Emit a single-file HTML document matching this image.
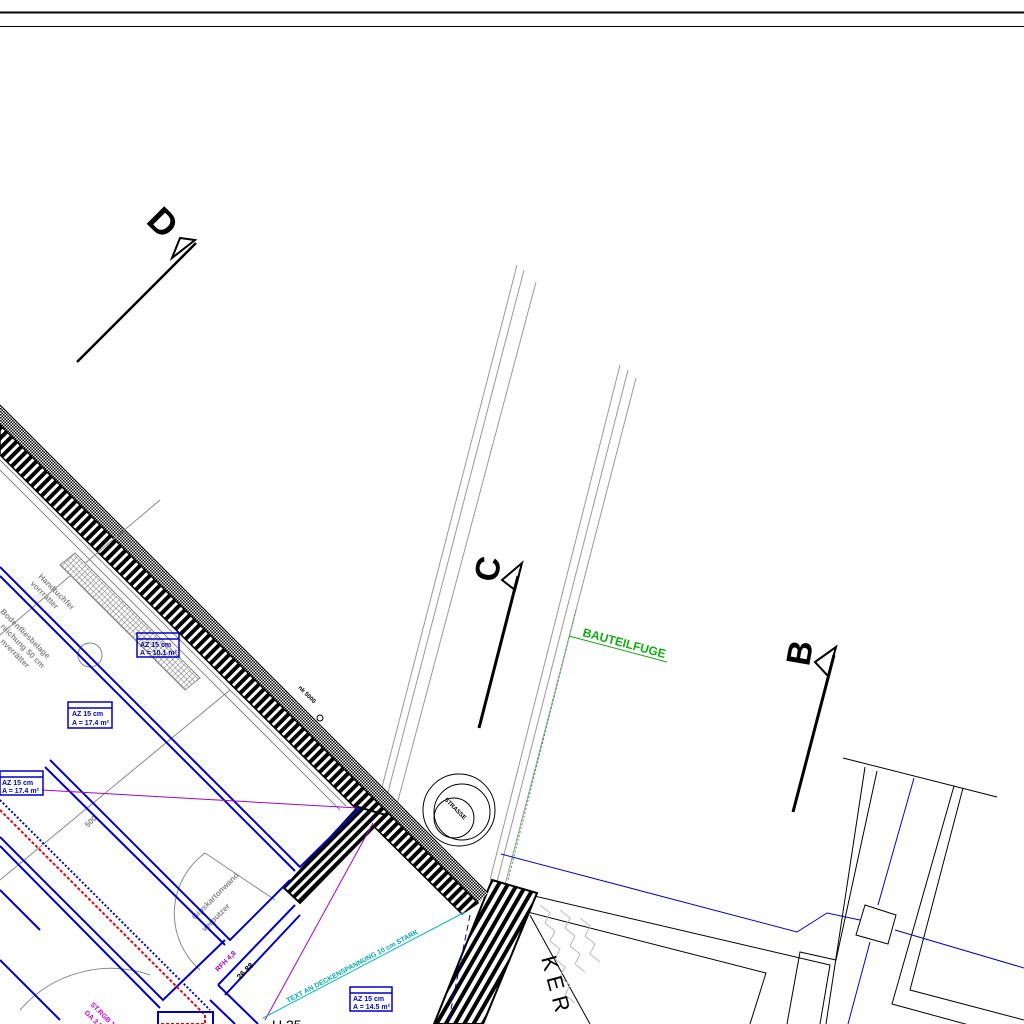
<!DOCTYPE html>
<html><head><meta charset="utf-8"><style>
html,body{margin:0;padding:0;background:#fff;width:1024px;height:1024px;overflow:hidden}
svg{display:block}
text{font-family:"Liberation Sans",sans-serif;font-weight:bold}
</style></head><body>
<svg width="1024" height="1024" viewBox="0 0 1024 1024" xmlns="http://www.w3.org/2000/svg">
<defs>
<pattern id="hat" width="7" height="7" patternUnits="userSpaceOnUse" patternTransform="rotate(-45)">
<rect width="7" height="7" fill="#fff"/><rect width="7" height="4" fill="#000"/>
</pattern>
<pattern id="hat2" width="8" height="8" patternUnits="userSpaceOnUse" patternTransform="rotate(30)">
<rect width="8" height="8" fill="#fff"/><rect width="4" height="8" fill="#000"/>
</pattern>
<pattern id="dots" width="3" height="3" patternUnits="userSpaceOnUse">
<rect width="3" height="3" fill="#fff"/><rect width="1.5" height="1.5" fill="#000"/><rect x="1.5" y="1.5" width="1.5" height="1.5" fill="#000"/>
</pattern>
<pattern id="grid" width="4" height="4" patternUnits="userSpaceOnUse" patternTransform="rotate(45)">
<rect width="4" height="4" fill="#fff"/><path d="M0 0H4M0 0V4" stroke="#777" stroke-width="1"/>
</pattern>
</defs>
<line x1="0" y1="12.5" x2="1024" y2="12.5" stroke="#000" stroke-width="2"/>
<line x1="0" y1="26.5" x2="1024" y2="26.5" stroke="#000" stroke-width="1"/>

<text x="0" y="0" font-size="36" transform="translate(145,222) rotate(45)" style="font-weight:bold">D</text>
<polygon points="172,258 195,240 180,238" fill="none" stroke="#000" stroke-width="2"/>
<line x1="77" y1="362" x2="196" y2="243" stroke="#000" stroke-width="2.5"/>
<text x="0" y="0" font-size="34" transform="translate(497,583) rotate(-80)" style="font-weight:bold">C</text>
<polygon points="502,580 522,563 515,590" fill="none" stroke="#000" stroke-width="2"/>
<line x1="479" y1="728" x2="518" y2="576" stroke="#000" stroke-width="3"/>
<text x="0" y="0" font-size="34" transform="translate(809,667) rotate(-80)" style="font-weight:bold">B</text>
<polygon points="815,662 836,647 828,676" fill="none" stroke="#000" stroke-width="2"/>
<line x1="793" y1="812" x2="834" y2="655" stroke="#000" stroke-width="3"/>

<g stroke="#999" stroke-width="1" fill="none">
<line x1="517" y1="265" x2="380" y2="795"/>
<line x1="524" y1="270" x2="386" y2="800"/>
<line x1="536" y1="282" x2="396" y2="808"/>
<line x1="620" y1="365" x2="490" y2="880"/>
<line x1="628" y1="370" x2="497" y2="882"/>
<line x1="636" y1="378" x2="505" y2="885"/>
</g>
<line x1="576" y1="610" x2="508" y2="880" stroke="#2a2" stroke-width="1" stroke-dasharray="2,2"/>
<text transform="translate(582,636) rotate(15)" font-size="12" fill="#1a1">BAUTEILFUGE</text>
<line x1="569" y1="636" x2="667" y2="662" stroke="#1a1" stroke-width="1"/>

<circle cx="459" cy="810" r="36" fill="none" stroke="#000"/>
<circle cx="462" cy="812" r="28" fill="none" stroke="#000"/>
<circle cx="454" cy="818" r="20" fill="none" stroke="#000"/>
<text transform="translate(444,800) rotate(45)" font-size="6">STRASSE</text>

<g stroke="#000" stroke-width="1" fill="none">
<line x1="843" y1="758" x2="997" y2="797"/>
<polyline points="865,767 826,1024"/>
<polyline points="877,771 836,960 800,952 787,1024"/>
<polyline points="954,786 892,1004 1024,1040"/>
<polyline points="963,788 910,990 1024,1020"/>
<polyline points="500,888 830,965 820,1024"/>
<polyline points="500,905 766,973 750,1024"/>
<polygon points="865,905 896,915 888,944 856,935"/>
<line x1="530" y1="915" x2="590" y2="1024"/>
</g>
<g stroke="#00c" stroke-width="1" fill="none">
<polyline points="501,854 797,932 827,913 860,920"/>
<line x1="895" y1="930" x2="1024" y2="968"/>
<line x1="914" y1="778" x2="878" y2="905"/>
<line x1="870" y1="942" x2="848" y2="1024"/>
</g>
<g stroke="#bbb" stroke-width="1" fill="none">
<path d="M540,905 l10,8 l-5,10 l10,8 l-5,10 l10,8 l-5,10 l10,8 l-5,10 l10,8 l-5,10 l10,8"/>
<path d="M560,910 l10,8 l-5,10 l10,8 l-5,10 l10,8 l-5,10 l10,8"/>
<path d="M580,918 l10,8 l-5,10 l10,8 l-5,10 l10,8"/>
</g>
<polygon points="492,880 537,893 483,1024 434,1024" fill="url(#hat2)" stroke="#000" stroke-width="2"/>
<line x1="470" y1="915" x2="448" y2="1024" stroke="#00c" stroke-dasharray="6,4"/>
<text transform="translate(541,958) rotate(75)" font-size="22" style="font-weight:normal" letter-spacing="6">KER</text>

<polygon points="0,405 488,893 478,903 0,425" fill="url(#dots)"/>
<polygon points="0,425 478,903 462,914 0,455" fill="url(#hat)" stroke="#000" stroke-width="1.5"/>
<line x1="0" y1="405" x2="488" y2="893" stroke="#000"/>
<polygon points="358,807 386,815 300,903 284,888" fill="url(#hat)" stroke="#000" stroke-width="2"/>
<text transform="translate(298,688) rotate(45)" font-size="6">nk 5000</text>
<circle cx="320" cy="718" r="3" fill="none" stroke="#000"/>

<g stroke="#888" stroke-width="1" fill="none">
<line x1="0" y1="460" x2="346" y2="806"/>
<line x1="0" y1="470" x2="340" y2="810"/>
<line x1="0" y1="635" x2="160" y2="500"/>
<line x1="0" y1="880" x2="230" y2="690"/>
<path d="M205,853 A75,75 0 0 0 200,970"/>
<path d="M20,1010 A120,120 0 0 1 150,975"/>
<line x1="205" y1="853" x2="275" y2="900"/>
</g>
<polygon points="60,565 75,553 200,678 185,690" fill="url(#grid)" stroke="#888"/>
<circle cx="90" cy="655" r="12" fill="none" stroke="#888"/>
<text transform="translate(38,577) rotate(45)" font-size="8" fill="#888">Handtuchfer</text>
<text transform="translate(30,584) rotate(45)" font-size="8" fill="#888">vorrrätter</text>
<text transform="translate(0,612) rotate(45)" font-size="8" fill="#888">Bodenfliesbelage</text>
<text transform="translate(0,627) rotate(45)" font-size="8" fill="#888">reichung 50 cm</text>
<text transform="translate(0,642) rotate(45)" font-size="8" fill="#888">nverrätter</text>
<text transform="translate(88,828) rotate(-45)" font-size="8" fill="#888">500</text>
<text transform="translate(195,920) rotate(-45)" font-size="8" fill="#888">Gipskartonwand</text>
<text transform="translate(205,932) rotate(-45)" font-size="8" fill="#888">verputzer</text>

<g stroke="#00c" stroke-width="2" fill="none">
<polyline points="0,567 300,867 360,808"/>
<polyline points="0,576 295,871"/>
<polyline points="50,760 230,940 290,880"/>
<polyline points="45,767 225,945"/>
<polyline points="0,837 163,1000 225,940"/>
<polyline points="0,846 160,1008"/>
<polyline points="0,890 40,930"/>
<polyline points="0,960 60,1020"/>
<polyline points="218,985 295,905"/>
<polyline points="225,995 300,915"/>
<polyline points="218,985 258,1024"/>
<polyline points="210,1000 235,1024"/>
</g>
<line x1="0" y1="800" x2="210" y2="1010" stroke="#00c" stroke-width="2" stroke-dasharray="2,2"/>
<line x1="0" y1="810" x2="205" y2="1015" stroke="#e00" stroke-width="2" stroke-dasharray="3,2"/>
<polyline points="205,1015 205,1024 160,1024" stroke="#e00" stroke-width="2" fill="none" stroke-dasharray="3,2"/>
<rect x="158" y="1012" width="55" height="14" fill="none" stroke="#00c" stroke-width="2"/>

<line x1="42" y1="790" x2="358" y2="808" stroke="#a0c" stroke-width="1"/>
<line x1="373" y1="823" x2="265" y2="1020" stroke="#a0c" stroke-width="1"/>
<line x1="465" y1="912" x2="263" y2="1018" stroke="#0bb" stroke-width="1"/>
<text transform="translate(288,1003) rotate(-28)" font-size="7" fill="#0aa">TEXT AN DECKENSPANNUNG 10 cm STARK</text>
<text transform="translate(90,1005) rotate(45)" font-size="7" fill="#c0c">ST.RGB 1100</text>
<text transform="translate(84,1013) rotate(45)" font-size="7" fill="#c0c">GA 3,0</text>
<text transform="translate(218,972) rotate(-45)" font-size="7" fill="#a0a">RFH 4,8</text>
<text transform="translate(240,980) rotate(-45)" font-size="8" fill="#000">26 88</text>
<text x="272" y="1030" font-size="14" style="font-weight:normal">U 25</text>

<g fill="none" stroke="#00c" stroke-width="1.5">
<rect x="68" y="702" width="44" height="26"/><line x1="68" y1="708" x2="112" y2="708"/>
<rect x="0" y="771" width="43" height="24"/><line x1="0" y1="777" x2="43" y2="777"/>
<rect x="137" y="633" width="42" height="24"/><line x1="137" y1="639" x2="179" y2="639"/>
<rect x="350" y="987" width="42" height="24"/><line x1="350" y1="993" x2="392" y2="993"/>
</g>
<g fill="#00c" font-size="7">
<text x="72" y="716">AZ 15 cm</text><text x="72" y="725">A = 17.4 m²</text>
<text x="2" y="785">AZ 15 cm</text><text x="2" y="793">A = 17.4 m²</text>
<text x="140" y="647">AZ 15 cm</text><text x="140" y="655">A = 10.1 m²</text>
<text x="353" y="1001">AZ 15 cm</text><text x="353" y="1009">A = 14.5 m²</text>
</g>
</svg>
</body></html>
